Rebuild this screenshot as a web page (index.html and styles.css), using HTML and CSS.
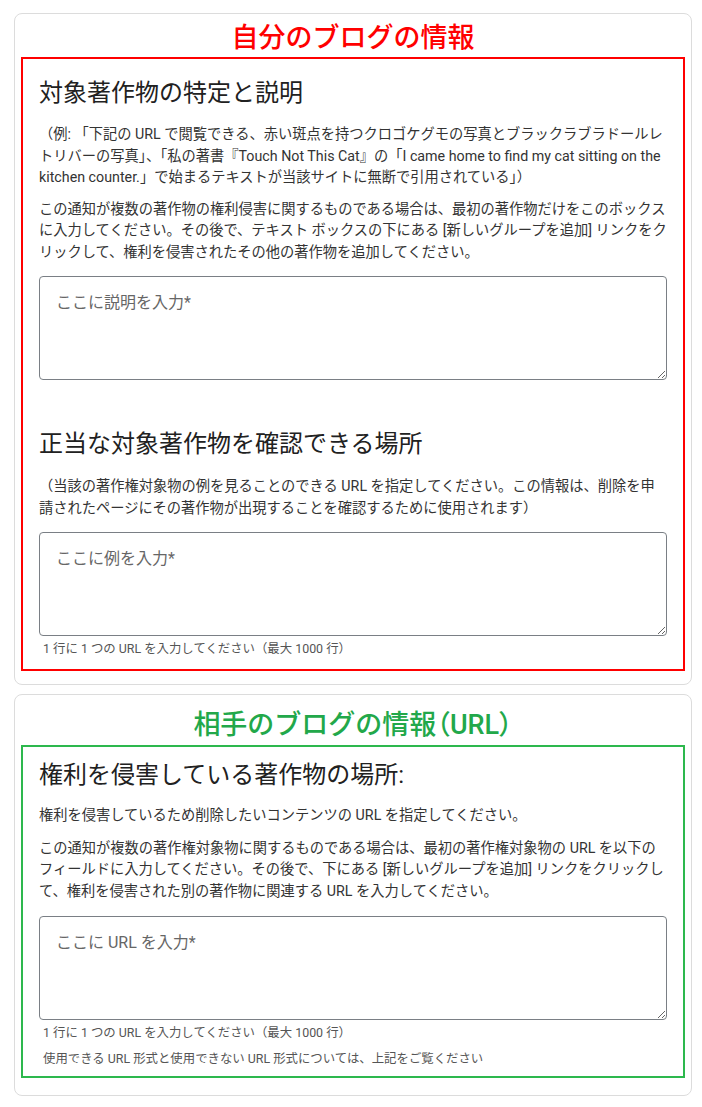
FILE: index.html
```html
<!DOCTYPE html>
<html lang="ja">
<head>
<meta charset="utf-8">
<title>著作権侵害の通知</title>
<link rel="stylesheet" href="styles.css">
</head>
<body>
<div class="page">
  <section class="card card-own">
    <h1 class="card-title title-red">自分のブログの情報</h1>
    <div class="box box-red">
      <h2 class="sec-heading first">対象著作物の特定と説明</h2>
      <p class="desc">（例: 「下記の URL で閲覧できる、赤い斑点を持つクロゴケグモの写真とブラックラブラドールレトリバーの写真」、「私の著書『Touch Not This Cat』の「I came home to find my cat sitting on the kitchen counter.」で始まるテキストが当該サイトに無断で引用されている」）</p>
      <p class="desc">この通知が複数の著作物の権利侵害に関するものである場合は、最初の著作物だけをこのボックスに入力してください。その後で、テキスト ボックスの下にある [新しいグループを追加] リンクをクリックして、権利を侵害されたその他の著作物を追加してください。</p>
      <textarea class="field" placeholder="ここに説明を入力*"></textarea>
      <h2 class="sec-heading second">正当な対象著作物を確認できる場所</h2>
      <p class="desc">（当該の著作権対象物の例を見ることのできる URL を指定してください。この情報は、削除を申請されたページにその著作物が出現することを確認するために使用されます）</p>
      <textarea class="field" placeholder="ここに例を入力*"></textarea>
      <p class="hint">1 行に 1 つの URL を入力してください（最大 1000 行）</p>
    </div>
  </section>
  <section class="card card-other">
    <h1 class="card-title title-green">相手のブログの情報<span class="paren">（</span>URL<span class="paren">）</span></h1>
    <div class="box box-green">
      <h2 class="sec-heading">権利を侵害している著作物の場所:</h2>
      <p class="desc">権利を侵害しているため削除したいコンテンツの URL を指定してください。</p>
      <p class="desc">この通知が複数の著作権対象物に関するものである場合は、最初の著作権対象物の URL を以下のフィールドに入力してください。その後で、下にある [新しいグループを追加] リンクをクリックして、権利を侵害された別の著作物に関連する URL を入力してください。</p>
      <textarea class="field" placeholder="ここに URL を入力*"></textarea>
      <p class="hint">1 行に 1 つの URL を入力してください（最大 1000 行）</p>
      <p class="hint hint-last">使用できる URL 形式と使用できない URL 形式については、上記をご覧ください</p>
    </div>
  </section>
</div>
</body>
</html>
```
FILE: styles.css
```css
* { box-sizing: border-box; }
html, body { margin: 0; padding: 0; background: #fff; }
body {
  font-family: Roboto, "Noto Sans CJK JP", sans-serif;
  color: #333;
}
.page {
  padding: 13px 10px 0 14px;
  display: flex;
  flex-direction: column;
  gap: 9px;
}
.card {
  width: 678px;
  border: 1px solid #dcdcdc;
  border-radius: 8px;
  padding: 0 6px 13px 6px;
  display: flex;
  flex-direction: column;
}
.card-other { padding-bottom: 17px; }
.card-title {
  margin: 0;
  text-align: center;
  font-size: 27px;
  line-height: 36px;
  font-weight: 500;
}
.card-own .card-title { padding: 6px 0 1px; }
.card-other .card-title { padding: 12px 0 2px; }
.paren { font-feature-settings: "palt"; }
.title-red { color: #ff0000; }
.title-green { color: #22a84a; }
.box {
  border: 2px solid;
  padding: 0 16px;
  display: flex;
  flex-direction: column;
}
.box-red { border-color: #ff0000; padding-top: 19px; padding-bottom: 11px; }
.box-green { border-color: #2db84d; padding-top: 13px; padding-bottom: 8px; }
.sec-heading {
  margin: 0;
  font-size: 24px;
  line-height: 30px;
  font-weight: 400;
  color: #212121;
}
.sec-heading.second { margin-top: 49px; }
.desc {
  margin: 17px 0 0;
  font-size: 14.25px;
  line-height: 21.5px;
  color: #333;
}
.sec-heading.first + .desc { margin-top: 16px; }
.box-green .sec-heading + .desc { margin-top: 15px; }
.desc + .desc { margin-top: 11px; }
.box-red .desc + .desc { margin-top: 10px; }
.field {
  display: block;
  margin: 13px 0 0;
  width: 628px;
  height: 104px;
  border: 1px solid #7a7f85;
  border-radius: 4px;
  padding: 14px 16px;
  font-family: Roboto, "Noto Sans CJK JP", sans-serif;
  font-size: 16px;
  line-height: 24px;
  color: #333;
  resize: vertical;
}
.box-green .field { margin-top: 14px; }
.field::placeholder { color: #666; }
.hint {
  margin: 4px 0 0;
  padding-left: 4px;
  font-size: 12.4px;
  line-height: 18px;
  color: #555;
}
.hint-last { margin-top: 8px; }
```
